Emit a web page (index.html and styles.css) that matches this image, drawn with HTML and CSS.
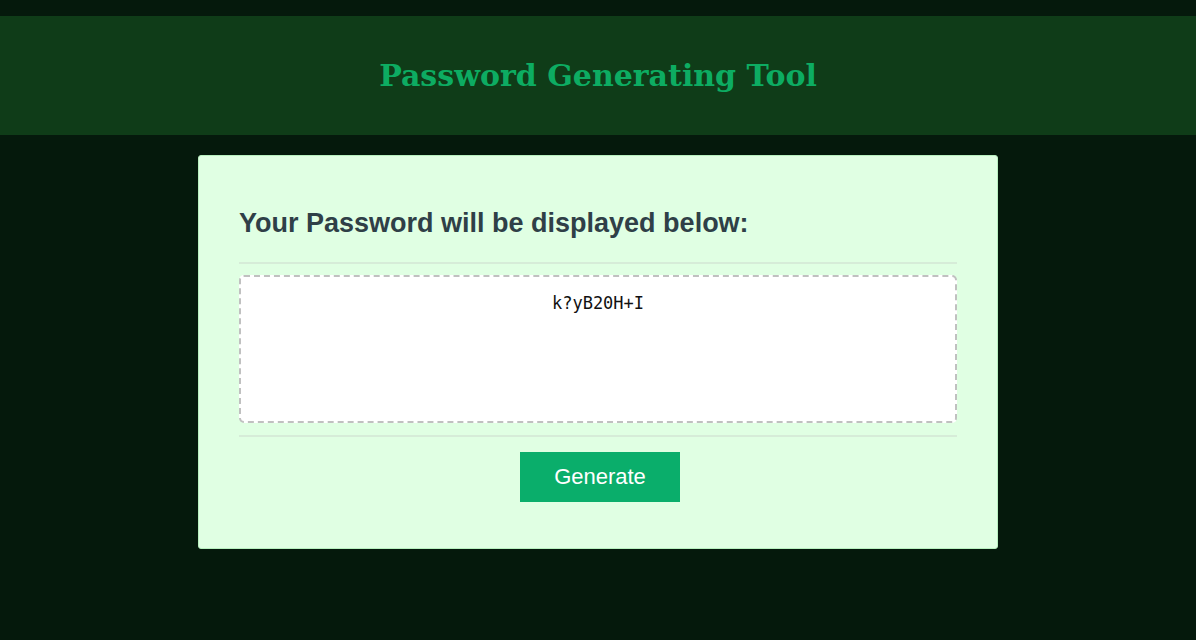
FILE: index.html
```html
<!DOCTYPE html>
<html>
<head>
<meta charset="utf-8">
<link rel="stylesheet" href="styles.css">
</head>
<body>
<header class="header">
  <h1 class="title">Password Generating Tool</h1>
</header>
<main class="main">
  <section class="card">
    <h2 class="card-title">Your Password will be displayed below:</h2>
    <hr class="rule">
    <div class="output">k?yB20H+I</div>
    <hr class="rule rule-bottom">
    <div class="actions">
      <button class="btn">Generate</button>
    </div>
  </section>
</main>
</body>
</html>
```
FILE: styles.css
```css
html, body {
  margin: 0;
  padding: 0;
}
body {
  background: #05190c;
  font-family: "Liberation Sans", Arial, sans-serif;
  padding-top: 16px;
  min-height: 624px;
}
.header {
  background: #0f3c18;
  height: 119px;
  display: flex;
  align-items: center;
  justify-content: center;
}
.title {
  margin: 0;
  font-family: "DejaVu Serif", Georgia, serif;
  font-weight: bold;
  font-size: 30px;
  color: #0dac62;
}
.main {
  display: flex;
  justify-content: center;
  padding-top: 20px;
}
.card {
  width: 718px;
  background: #e0ffe3;
  border: 1px solid #b8f0bf;
  border-radius: 3px;
  padding: 40px 40px 46px 40px;
}
.card-title {
  margin: 0;
  padding-top: 12px;
  font-size: 27px;
  font-weight: bold;
  color: #2f3f47;
  line-height: 30px;
}
.rule {
  border: 0;
  height: 2px;
  background: #d6ecd8;
  margin: 24px 0 0;
}
.rule-bottom {
  margin-top: 12px;
}
.output {
  margin-top: 11px;
  background: #fff;
  border: 2px dashed #c0c0c0;
  border-radius: 5px;
  text-align: center;
  font-family: "DejaVu Sans Mono", monospace;
  font-size: 17px;
  color: #111;
  padding-top: 16px;
  box-sizing: border-box;
  height: 148px;
}
.actions {
  display: flex;
  justify-content: center;
  padding: 15px 0 0 4px;
}
.btn {
  width: 160px;
  height: 50px;
  border: 0;
  background: #0aae6b;
  color: #fff;
  font-family: "Liberation Sans", Arial, sans-serif;
  font-size: 22px;
  cursor: pointer;
}
```
